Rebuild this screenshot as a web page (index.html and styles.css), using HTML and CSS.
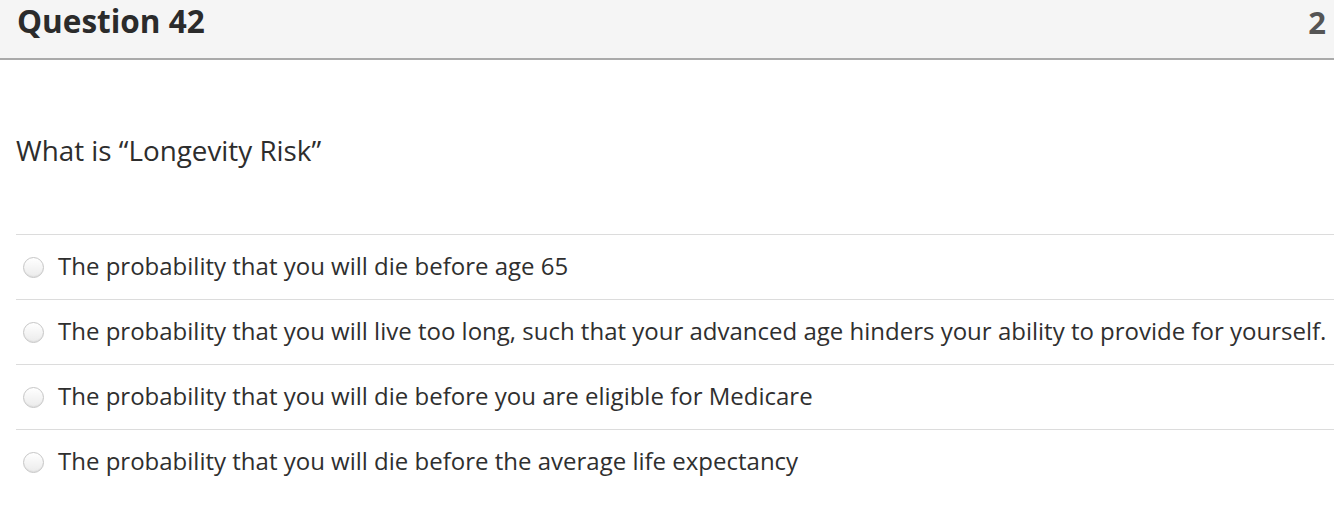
FILE: index.html
```html
<!DOCTYPE html>
<html>
<head>
<meta charset="utf-8">
<link rel="stylesheet" href="styles.css">
</head>
<body>
<div class="question">
  <div class="header">
    <h2 class="title">Question 42</h2>
    <div class="points">2</div>
  </div>
  <div class="body">
    <div class="prompt">What is “Longevity Risk”</div>
    <div class="answers">
      <label class="answer"><span class="radio"></span><span class="text">The probability that you will die before age 65</span></label>
      <label class="answer"><span class="radio"></span><span class="text">The probability that you will live too long, such that your advanced age hinders your ability to provide for yourself.</span></label>
      <label class="answer"><span class="radio"></span><span class="text">The probability that you will die before you are eligible for Medicare</span></label>
      <label class="answer"><span class="radio"></span><span class="text">The probability that you will die before the average life expectancy</span></label>
    </div>
  </div>
</div>
</body>
</html>
```
FILE: styles.css
```css
html, body {
  margin: 0;
  padding: 0;
  background: #fff;
}
body {
  font-family: "Open Sans", "Liberation Sans", sans-serif;
  color: #2d3b45;
  width: 1334px;
  overflow: hidden;
}
.header {
  display: flex;
  align-items: center;
  justify-content: space-between;
  height: 58px;
  background: #f5f5f5;
  border-bottom: 2px solid #aaaaaa;
  padding: 0 8px 0 17px;
  box-sizing: content-box;
}
.title {
  margin: 0;
  font-size: 31.5px;
  font-weight: 700;
  color: #2b2b2b;
  line-height: 1;
  padding-bottom: 17px;
}
.points {
  font-size: 31px;
  font-weight: 700;
  color: #555;
  line-height: 1;
  padding-bottom: 13px;
}
.body {
  padding-left: 16px;
}
.prompt {
  font-size: 27.8px;
  color: #2d2d2d;
  padding-top: 71px;
  line-height: 38px;
  height: 103px;
}
.answers {
  border-top: 1px solid #dcdcdc;
}
.answer {
  display: flex;
  align-items: center;
  height: 64px;
  border-bottom: 1px solid #dcdcdc;
  font-size: 24px;
  color: #2f2f2f;
}
.answer:last-child {
  border-bottom: none;
}
.text {
  padding-bottom: 4px;
}
.radio {
  width: 21px;
  height: 21px;
  border-radius: 50%;
  border: 1px solid #c6c6c6;
  background: linear-gradient(#ffffff, #ebebeb);
  box-shadow: inset 0 -1px 1px rgba(0,0,0,0.05);
  margin-left: 7px;
  margin-right: 14px;
  flex: none;
  box-sizing: border-box;
}
```
